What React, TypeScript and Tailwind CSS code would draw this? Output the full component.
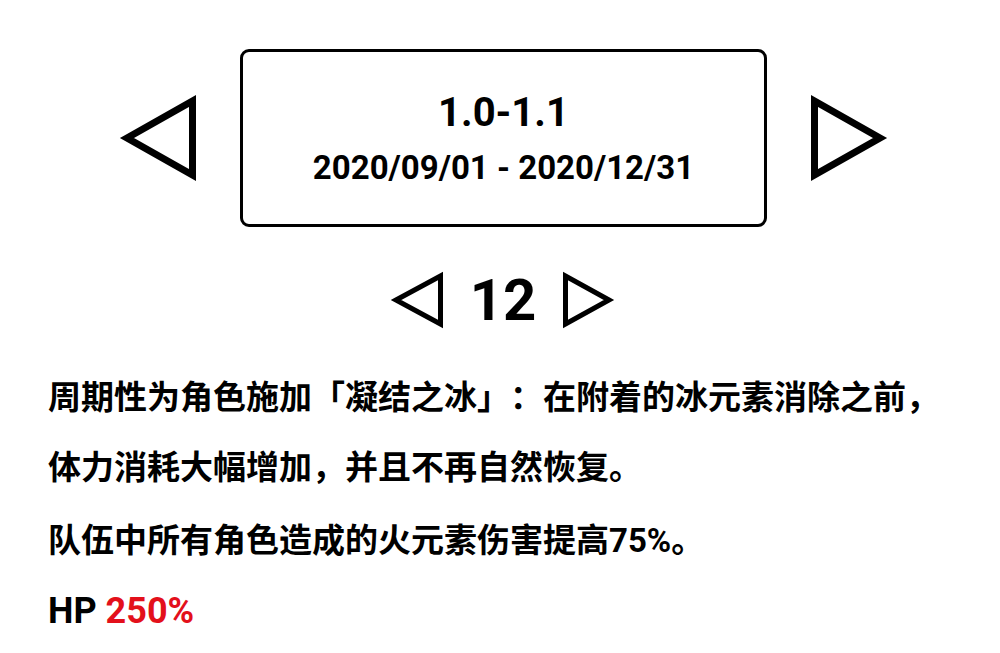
import React from "react";

const font = { fontFamily: '"Roboto", "Noto Sans CJK SC", sans-serif' };

// Outlined arrow triangle, pointing left or right; miter tips reach the box edges
function Arrow({ dir, w, h, sw }: { dir: "left" | "right"; w: number; h: number; sw: number }) {
  const tipX = dir === "left" ? sw : w - sw;
  const baseX = dir === "left" ? w - sw / 2 : sw / 2;
  return (
    <svg width={w} height={h} viewBox={`0 0 ${w} ${h}`} className="shrink-0 overflow-visible">
      <polygon
        points={`${tipX},${h / 2} ${baseX},${sw} ${baseX},${h - sw}`}
        fill="none"
        stroke="#000"
        strokeWidth={sw}
        strokeLinejoin="miter"
        strokeMiterlimit={10}
      />
    </svg>
  );
}

export default function App() {
  return (
    <div className="w-[1000px] h-[653px] bg-white text-black overflow-hidden" style={font}>
      <section className="pt-[49px] pl-[7px] flex items-center justify-center gap-[44px]">
        <Arrow dir="left" w={76} h={88} sw={7} />
        <div className="w-[527px] border-[3px] border-black rounded-[9px] pt-[41px] pb-[40px] flex flex-col items-center">
          <div className="text-[40px] leading-[40px] font-bold">1.0-1.1</div>
          <div className="mt-[18px] text-[33px] leading-[33px] font-bold">2020/09/01 - 2020/12/31</div>
        </div>
        <Arrow dir="right" w={76} h={88} sw={7} />
      </section>

      <section className="mt-[44px] pl-[5px] flex items-center justify-center gap-[27px]">
        <Arrow dir="left" w={52} h={58} sw={5} />
        <div className="text-[58px] leading-[58px] font-bold">12</div>
        <Arrow dir="right" w={51} h={58} sw={5} />
      </section>

      <section className="mt-[34px] pl-[48px] pr-[50px] text-[33px] font-bold [text-spacing-trim:space-all]">
        <p className="leading-[70px]">
          周期性为角色施加「凝结之冰」：在附着的冰元素消除之前，体力消耗大幅增加，并且不再自然恢复。
        </p>
        <p className="mt-[3px] leading-[70px]">队伍中所有角色造成的火元素伤害提高75%。</p>
        <p className="leading-[70px] text-[36px]">
          HP <span className="text-[#e3101b]">250%</span>
        </p>
      </section>
    </div>
  );
}
